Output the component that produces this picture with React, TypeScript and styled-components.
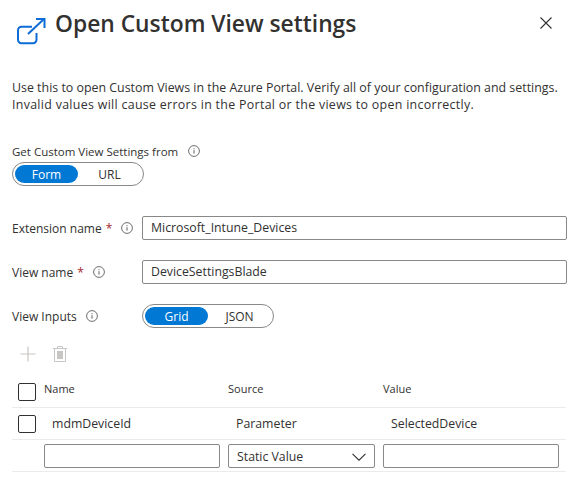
import React from "react";
import styled, { createGlobalStyle } from "styled-components";

const GlobalStyle = createGlobalStyle`
  html, body {
    margin: 0;
    padding: 0;
    background: #fff;
  }
  body {
    font-family: "Open Sans", "Noto Sans", "Liberation Sans", sans-serif;
    font-size: 12px;
    color: #323130;
  }
`;

const Page = styled.div`
  width: 581px;
  height: 485px;
  box-sizing: border-box;
  padding: 0 14px 0 12px;
  overflow: hidden;
`;

const Header = styled.header`
  display: flex;
  align-items: flex-start;
  height: 79px;
  padding: 17px 0 0 4px;
  box-sizing: border-box;
`;

const HeaderIcon = styled.svg`
  width: 30px;
  height: 28px;
  flex: none;
  color: #0f6cd6;
`;

const Title = styled.h1`
  flex: 1;
  margin: -7px 0 0 9px;
  font-size: 22.8px;
  line-height: 28px;
  font-weight: 600;
  color: #323130;
  white-space: nowrap;
`;

const CloseButton = styled.svg`
  width: 12px;
  height: 12px;
  margin: 0 15px 0 0;
  color: #323130;
`;

const Description = styled.p`
  margin: 0;
  font-size: 12.4px;
  line-height: 17px;
  white-space: nowrap;
`;

const DescriptionLine = styled.span<{ $spacing: number }>`
  display: block;
  letter-spacing: ${(p) => p.$spacing}px;
`;

const FieldLabel = styled.div`
  display: flex;
  align-items: center;
  height: 16px;
  margin-top: 30px;
  font-size: 11.5px;
`;

const LabelText = styled.span`
  white-space: nowrap;
`;

const Required = styled.span`
  margin-left: 4px;
  color: #a4262c;
`;

const Info = styled.svg<{ $gap: number }>`
  width: 12px;
  height: 12px;
  flex: none;
  margin-left: ${(p) => p.$gap}px;
  color: #605e5c;
`;

const Toggle = styled.div`
  display: flex;
  align-items: center;
  width: 132px;
  height: 24px;
  box-sizing: border-box;
  padding: 2px;
  border: 1px solid #8a8886;
  border-radius: 12px;
`;

const ToggleOption = styled.div<{ $on?: boolean }>`
  flex: 1;
  height: 18px;
  line-height: 19px;
  text-align: center;
  font-size: 12px;
  border-radius: 9px;
  background: ${(p) => (p.$on ? "#0078d4" : "transparent")};
  color: ${(p) => (p.$on ? "#fff" : "#323130")};
`;

const SourceToggle = styled.div`
  margin: 3px 0 30px;
`;

const FormRow = styled.div`
  display: flex;
  align-items: center;
  height: 24px;
  margin-bottom: 20px;
`;

const RowLabel = styled.div`
  display: flex;
  align-items: center;
  width: 130px;
  flex: none;
  font-size: 12px;
`;

const TextInput = styled.div`
  flex: 1;
  height: 24px;
  box-sizing: border-box;
  padding: 0 8px;
  border: 1px solid #8a8886;
  border-radius: 2px;
  font-size: 12.3px;
  line-height: 22px;
  white-space: nowrap;
`;

const Toolbar = styled.div`
  display: flex;
  align-items: center;
  gap: 16px;
  height: 24px;
  margin-top: -6px;
  padding-left: 8px;
  color: #c8c6c4;
`;

const ToolIcon = styled.svg`
  width: 16px;
  height: 16px;
  display: block;
`;

const TableGrid = styled.div`
  width: 554px;
  margin-top: 10px;
  font-size: 12.3px;
`;

const TableRow = styled.div`
  display: grid;
  grid-template-columns: 24px 176px 147px 176px;
  column-gap: 8px;
  align-items: center;
  height: 32px;
  box-sizing: border-box;
  border-bottom: 1px solid #edebe9;
`;

const Check = styled.div`
  width: 18px;
  height: 18px;
  margin-left: 6px;
  box-sizing: border-box;
  border: 1px solid #323130;
  border-radius: 2px;
`;

const HeadCell = styled.div`
  font-size: 11px;
  margin-bottom: 7px;
`;

const BodyCell = styled.div`
  margin-left: 8px;
  white-space: nowrap;
`;

const CellInput = styled.div`
  height: 24px;
  box-sizing: border-box;
  border: 1px solid #8a8886;
  border-radius: 2px;
`;

const CellSelect = styled(CellInput)`
  display: flex;
  align-items: center;
  justify-content: space-between;
  padding: 2px 8px 0;
  line-height: 20px;
`;

const Chevron = styled.svg`
  width: 14px;
  height: 8px;
  flex: none;
  color: #323130;
`;

const InfoIcon = ({ gap }: { gap: number }) => (
  <Info $gap={gap} viewBox="0 0 12 12" fill="none" stroke="currentColor">
    <circle cx="6" cy="6" r="5.4" strokeWidth="0.9" />
    <path d="M6 5.2v3.4" strokeWidth="1" />
    <path d="M6 3.2v1" strokeWidth="1" />
  </Info>
);

export default function App() {
  return (
    <>
      <GlobalStyle />
      <Page>
        <Header>
          <HeaderIcon viewBox="0 0 30 28" fill="none" stroke="currentColor" strokeWidth="2">
            <path d="M16 9.8H5.5a3.5 3.5 0 0 0-3.5 3.5v9.4a3.5 3.5 0 0 0 3.5 3.5H17a3.5 3.5 0 0 0 3.5-3.5V16" />
            <path d="M12 17 28.5 1.5" />
            <path d="M20 2H28.5V11" />
          </HeaderIcon>
          <Title>Open Custom View settings</Title>
          <CloseButton viewBox="0 0 12 12" fill="none" stroke="currentColor" strokeWidth="1.1">
            <path d="M.5.5l11 11M11.5.5l-11 11" />
          </CloseButton>
        </Header>

        <Description>
          <DescriptionLine $spacing={0}>
            Use this to open Custom Views in the Azure Portal. Verify all of your configuration and settings.
          </DescriptionLine>
          <DescriptionLine $spacing={0.31}>
            Invalid values will cause errors in the Portal or the views to open incorrectly.
          </DescriptionLine>
        </Description>

        <FieldLabel>
          <LabelText>Get Custom View Settings from</LabelText>
          <InfoIcon gap={10} />
        </FieldLabel>
        <SourceToggle>
          <Toggle>
            <ToggleOption $on>Form</ToggleOption>
            <ToggleOption>URL</ToggleOption>
          </Toggle>
        </SourceToggle>

        <FormRow>
          <RowLabel>
            <LabelText>Extension name</LabelText>
            <Required>*</Required>
            <InfoIcon gap={9} />
          </RowLabel>
          <TextInput>Microsoft_Intune_Devices</TextInput>
        </FormRow>
        <FormRow>
          <RowLabel>
            <LabelText>View name</LabelText>
            <Required>*</Required>
            <InfoIcon gap={9} />
          </RowLabel>
          <TextInput>DeviceSettingsBlade</TextInput>
        </FormRow>
        <FormRow>
          <RowLabel>
            <LabelText>View Inputs</LabelText>
            <InfoIcon gap={9} />
          </RowLabel>
          <Toggle>
            <ToggleOption $on>Grid</ToggleOption>
            <ToggleOption>JSON</ToggleOption>
          </Toggle>
        </FormRow>

        <Toolbar>
          <ToolIcon viewBox="0 0 16 16" fill="none" stroke="currentColor" strokeWidth="1.2">
            <path d="M8 .5v15M.5 8h15" />
          </ToolIcon>
          <ToolIcon viewBox="0 0 16 16" fill="none" stroke="currentColor">
            <path d="M1 2.5h14M2.5 2.5V15.5h11V2.5M5.5 2.5V.5h5v2" strokeWidth="1" />
            <rect x="5" y="5" width="6" height="8" fill="currentColor" stroke="none" />
          </ToolIcon>
        </Toolbar>

        <TableGrid>
          <TableRow>
            <Check />
            <HeadCell>Name</HeadCell>
            <HeadCell>Source</HeadCell>
            <HeadCell>Value</HeadCell>
          </TableRow>
          <TableRow>
            <Check />
            <BodyCell>mdmDeviceId</BodyCell>
            <BodyCell>Parameter</BodyCell>
            <BodyCell>SelectedDevice</BodyCell>
          </TableRow>
          <TableRow>
            <span />
            <CellInput />
            <CellSelect>
              Static Value
              <Chevron viewBox="0 0 14 8" fill="none" stroke="currentColor" strokeWidth="1.1">
                <path d="M.5.8 7 7.2 13.5.8" />
              </Chevron>
            </CellSelect>
            <CellInput />
          </TableRow>
        </TableGrid>
      </Page>
    </>
  );
}
